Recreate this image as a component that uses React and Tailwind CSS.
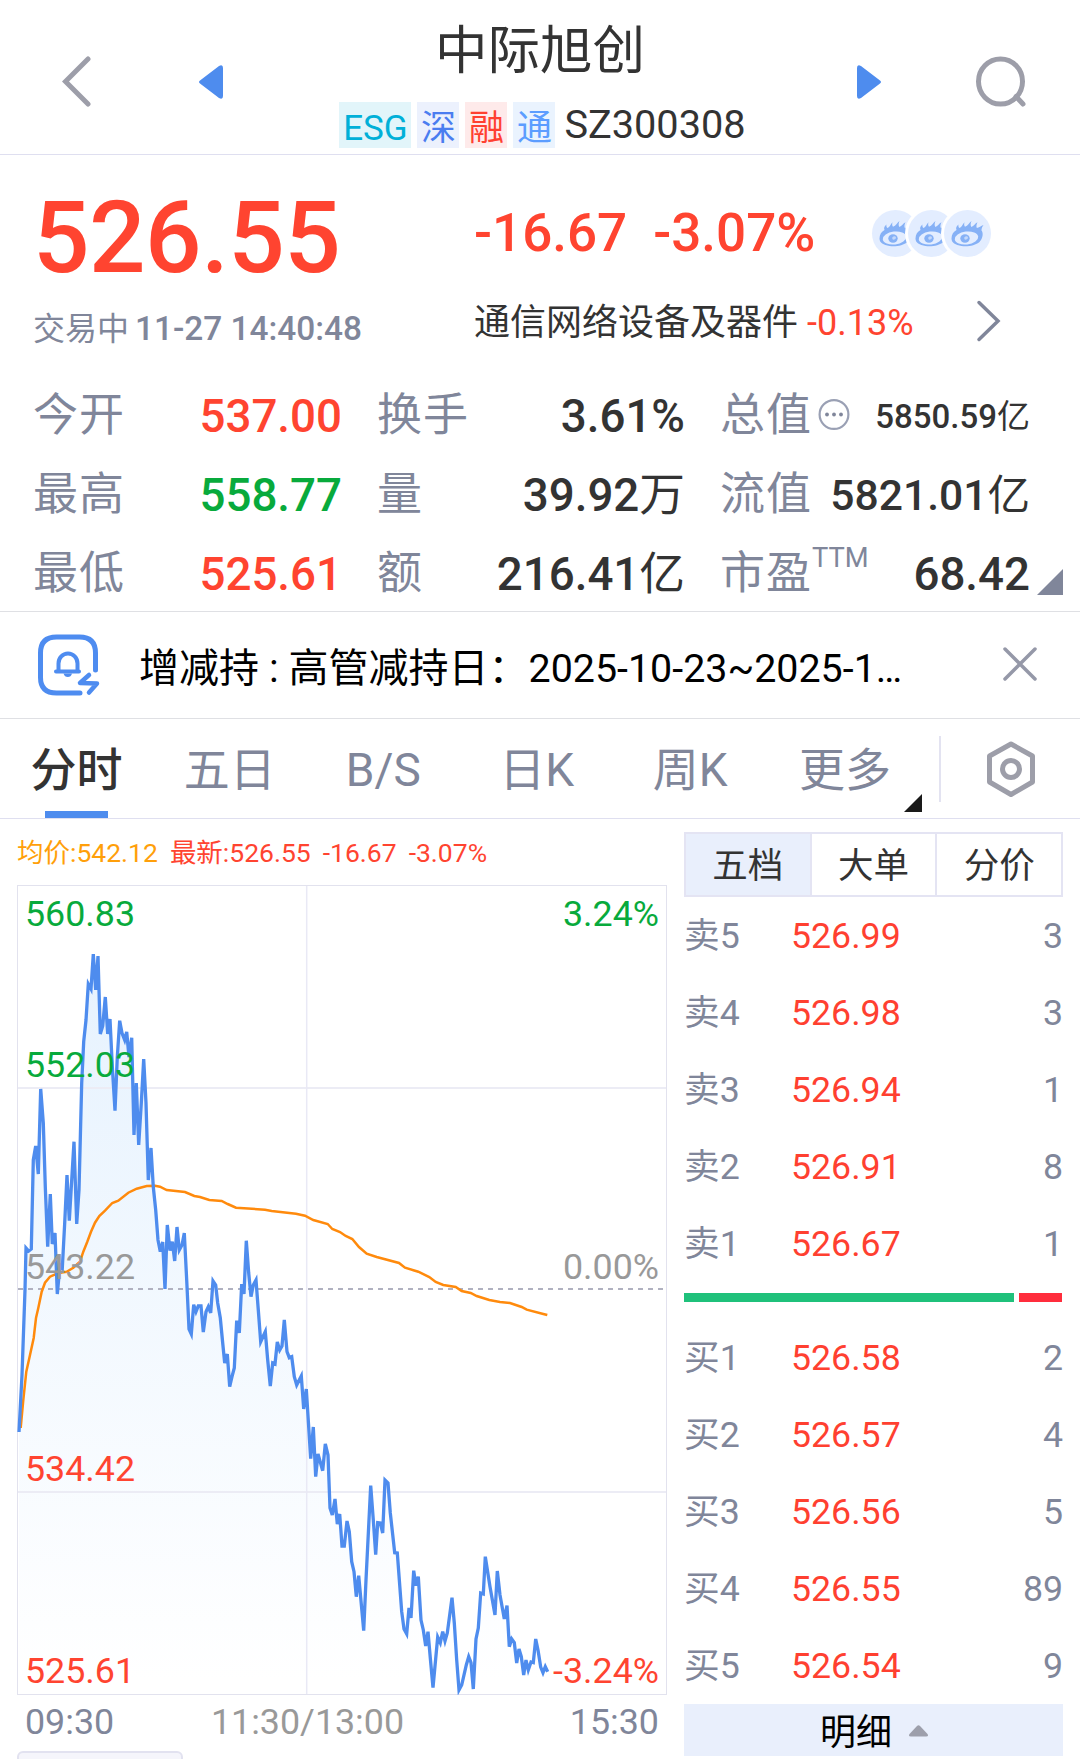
import React from 'react';

const tags = [
  { label: 'ESG', className: 'w-[72px] bg-[#e2f5fa] text-[#00b0d8]' },
  { label: '深', className: 'w-[42px] bg-[#ecf1fd] text-[#4a7df0]' },
  { label: '融', className: 'w-[42px] bg-[#feeaea] text-[#ff4030]' },
  { label: '通', className: 'w-[42px] bg-[#eaf3fe] text-[#5c9dff]' },
];

const tabs = ['五日', 'B/S', '日K', '周K'];

const sells = [
  ['卖5', '526.99', '3'],
  ['卖4', '526.98', '3'],
  ['卖3', '526.94', '1'],
  ['卖2', '526.91', '8'],
  ['卖1', '526.67', '1'],
];

const buys = [
  ['买1', '526.58', '2'],
  ['买2', '526.57', '4'],
  ['买3', '526.56', '5'],
  ['买4', '526.55', '89'],
  ['买5', '526.54', '9'],
];

const pricePoints =
  '19,1432 22,1375 25,1290 26,1248 28.7,1251 31.3,1249 33.3,1160 35.7,1146 38.3,1174 40.7,1089 43.3,1123 45.3,1187 47.7,1246.7 50.3,1194 52.3,1244 55,1233 57.3,1294 60,1265 62.3,1268 64.7,1223 67,1175 69.3,1220.7 74,1141.7 76.7,1224 79,1190 81.7,1083 83.7,1041.7 86,1020 88.3,984 91,989 93.3,954 95.7,990 98,956 100.3,1034 102.7,1026 105.3,997 107.7,1034 110,1019 112.3,1066.7 115,1110.7 117.3,1057 119.7,1020.7 122,1033 124.7,1040 126.7,1032 129,1057 131.7,1037.7 134,1135 136.3,1083 138.7,1145 141.3,1103 143.7,1059 146,1103 148.3,1180 151,1148 153.3,1187 155.7,1210 158,1240 160.3,1251.7 162.7,1242 165,1289 167.3,1225 170,1250.7 172.3,1241.7 174.7,1261 177,1227 179.3,1250 182,1245 184.3,1233 186.7,1280 189,1329 191.3,1334 193.7,1304.7 196,1311.7 198.3,1306 201,1306 203.3,1332 206,1311.7 208.3,1306.7 210.7,1313 213,1281 215.7,1285 217.7,1303 220.3,1318 222.7,1343 224.7,1363 227.3,1354 229.7,1386.7 232,1376.7 234.3,1368 236.7,1320.7 239.3,1333 241.7,1284 244,1294 246.3,1240.7 248.7,1273 251,1296.7 253.3,1285 256,1280 258.3,1310 260.7,1341.7 265.3,1331.7 267.7,1360 270.3,1386 272.7,1363 275,1364 277.3,1342 279.7,1350 282,1346 284.3,1320 287,1351.7 289.3,1357.7 291.7,1356.7 294.3,1376.7 296.7,1385 301.3,1376 303.7,1409 306.3,1389 310.7,1458.7 313.3,1427 315.7,1476.7 318,1454 322.7,1470.7 325.3,1444 328,1455 330,1508 332.3,1515 335,1499 337.3,1524 339.7,1514 342,1546 344.3,1546 347,1521 349.3,1531.7 351.7,1561.7 354,1571.7 356.3,1596.7 358.7,1575.7 363.7,1630.7 366,1580 370.7,1485.7 373.3,1520 375.7,1554.7 377.7,1522.7 380.3,1523 382.7,1533 385,1480 388,1483 390.3,1513 394.7,1552.7 397.3,1553 401.7,1611.7 404,1629 406.7,1634 409,1608 411,1618 413.7,1570.7 416,1585.7 418.3,1576.7 421,1620 423.3,1630 425.7,1646 428,1631.7 430.3,1658 433,1687.7 437.7,1637 440.3,1642.7 442.7,1631.7 445,1641 447.3,1633 452,1597.7 454.3,1623 456.7,1660 459,1690 461.7,1685 466.3,1665 468.7,1656.7 471,1662.7 473.3,1689 476,1639 478.3,1628 480.7,1593 483.3,1594 485.3,1556.7 490,1586.7 495,1615 497.3,1571 500,1595 504.3,1619 507,1605.7 509.3,1646.7 511.7,1639 514.3,1642.7 516.7,1663 519,1649 521.3,1656.7 523.7,1675 526,1660 528.3,1670 531,1662 533.3,1662.7 535.7,1639 538,1650 540.7,1667 543,1672.7 545.3,1666.7 547.7,1671.7';

const averagePoints =
  '20.7,1428 23.3,1400 26.3,1371.7 30,1355 33.7,1338 36,1318 38.3,1308 41.7,1291.7 45,1282.7 50,1276.7 58.3,1273 66.7,1271.7 73.3,1267.7 80,1261.7 83.3,1251.7 87.3,1241.7 91,1231.7 95,1222.7 99.3,1216 105,1210.7 112.3,1203 118.3,1200.7 128.3,1192.7 136.7,1188.7 146.7,1186 155,1185.7 160,1186.7 166.7,1190 185,1192 194.3,1196 200,1197 209.3,1200 221.7,1201 227.7,1204 236,1207.7 265,1209.7 271.7,1211 296,1213.7 305,1215.7 313.3,1220 327.7,1224 332.3,1229 340,1232 345.7,1236 352.3,1239 359,1247 366.7,1253.7 376.7,1257 399,1263 405,1267.7 418.3,1271.7 429.3,1277 435.7,1282 443.3,1285 455.7,1287 461.7,1291 470.7,1293 476.7,1296 489.3,1300 500,1302 510,1303 521.7,1307 526.7,1309.7 543.3,1314 547.3,1315';

const EyeBadge = ({ className }) => (
  <svg className={className} width="53" height="53" viewBox="0 0 53 53">
    <circle cx="26.5" cy="26.5" r="26.5" fill="#fff" />
    <circle cx="26.5" cy="26.5" r="23.5" fill="#e3edff" />
    <g transform="translate(10.5 13.5)">
      <path
        d="M0 18C0 14 2 11 5 9.500C4 7.500 5 5.500 7 4C6.600 5.600 7 6.800 8 7.600C10.500 6.500 11 3.500 13 1.800C12.500 3.500 12.500 5.200 13.500 6.300C16.500 5.400 17.500 2.500 20 0.500C19 2.800 18.800 4.800 19.800 6.400C22.500 5.600 23.500 3 26 1.800C25 4 24.600 5.800 25.300 7.400C27.500 7.200 29.500 5.500 32 4.500C30.500 6.500 30 8.200 30 10C32 12 31.500 18 28 21.500C24 25 16 26.500 10 25.500C4 24.500 0 22.500 0 18Z"
        fill="#86b1f6"
      />
      <ellipse cx="15" cy="17.500" rx="11.800" ry="6.500" transform="rotate(-7 15 17.500)" fill="#e3edff" />
      <ellipse cx="13.500" cy="18" rx="4.700" ry="4.200" fill="#86b1f6" />
      <ellipse cx="14.600" cy="17.400" rx="2" ry="1.500" transform="rotate(-30 14.600 17.400)" fill="#c3d8fb" />
    </g>
  </svg>
);

const Stat = ({ label, value, unit, extra, className }) => (
  <div className="flex h-[79px] items-center justify-between">
    <div className="flex items-center">
      <span className="text-[45px] leading-none tracking-[1px] text-[#80869a]">{label}</span>
      {extra}
    </div>
    <span className={`pt-[2px] leading-none whitespace-nowrap font-medium ${className}`}>
      {value}
      {unit && <span className="font-normal">{unit}</span>}
    </span>
  </div>
);

const OrderRow = ({ row }) => (
  <div className="flex h-[77px] items-center pt-[2px] text-[35.700px] leading-none text-[#80869a]">
    <span className="w-[107px]">{row[0]}</span>
    <span className="text-[#ff4030]">{row[1]}</span>
    <span className="ml-auto">{row[2]}</span>
  </div>
);

const Header = () => (
  <header className="flex h-[155px] border-b border-[#dfdff0]">
    <svg className="ml-[62px] mt-[55px]" width="30" height="53" viewBox="0 0 30 53" fill="none" stroke="#9d9ea9" strokeWidth="5" strokeLinecap="round">
      <path d="M26 4L3.500 26.500L26 49" />
    </svg>
    <svg className="ml-[107px] mt-[65px]" width="24" height="34" viewBox="0 0 24 34">
      <path d="M1 15.500L20 1Q24 -1 24 3V31Q24 35 20 33L1 18.500Q-1 17 1 15.500Z" fill="#4e8cee" />
    </svg>
    <div className="flex flex-1 flex-col items-center pt-[25px]">
      <h1 className="text-[52.500px] leading-[52px] text-[#333]">中际旭创</h1>
      <div className="ml-[5px] mt-[25px] flex h-[46px] items-center gap-[6px]">
        {tags.map((tag) => (
          <span key={tag.label} className={`flex h-[46px] items-center justify-center pt-[7px] text-[35px] leading-none ${tag.className}`}>
            {tag.label}
          </span>
        ))}
        <span className="ml-[3px] text-[39.700px] leading-none text-[#333]">SZ300308</span>
      </div>
    </div>
    <svg className="mt-[65px]" width="24" height="34" viewBox="0 0 24 34">
      <path d="M23 15.500L4 1Q0 -1 0 3V31Q0 35 4 33L23 18.500Q25 17 23 15.500Z" fill="#4e8cee" />
    </svg>
    <svg className="ml-[94px] mr-[53px] mt-[55px]" width="52" height="54" viewBox="0 0 52 54" fill="none" stroke="#9d9ea9" strokeWidth="5">
      <ellipse cx="25.500" cy="26.500" rx="22" ry="22.500" />
      <path d="M41 41.500L48 49" strokeLinecap="round" />
    </svg>
  </header>
);

const Quote = () => (
  <section className="h-[456px]">
    <div className="flex h-[221px] text-[#ff4430]">
      <div className="w-[474px] pl-[33px] pt-[33px]">
        <div className="text-[99.500px] font-medium leading-[100px] tracking-[-0.500px]">526.55</div>
        <div className="mt-[24px] flex items-center text-[33.400px] leading-[34px] text-[#80869a]">
          <span className="text-[32px]">交易中</span>
          <span className="ml-[6px] font-medium">11-27 14:40:48</span>
        </div>
      </div>
      <div className="flex-1">
        <div className="flex h-[107px] items-center pt-[49px]">
          <span className="pt-px text-[53px] font-medium leading-none">-16.67</span>
          <span className="ml-[26px] pt-px text-[53px] font-medium leading-none">-3.07%</span>
          <div className="ml-[54px] flex">
            <EyeBadge />
            <EyeBadge className="-ml-[17px]" />
            <EyeBadge className="-ml-[17px]" />
          </div>
        </div>
        <div className="flex items-center pt-[40px] leading-[36px]">
          <span className="pt-[2px] text-[36px] text-[#333]">通信网络设备及器件</span>
          <span className="ml-[9px] pt-[2px] text-[36px]">-0.13%</span>
          <svg className="-mt-[2px] ml-[62px]" width="26" height="42" viewBox="0 0 26 42" fill="none" stroke="#80869a" strokeWidth="3.500">
            <path d="M3 2.500L22 21L3 39.500" strokeLinecap="round" />
          </svg>
        </div>
      </div>
    </div>
    <div className="relative grid grid-cols-[309px_308px_310px] gap-x-[35px] pl-[33px]">
      <Stat label="今开" value="537.00" className="text-[45.700px] text-[#ff4430]" />
      <Stat label="换手" value="3.61%" className="text-[45.700px] text-[#333]" />
      <Stat
        label="总值"
        value="5850.59"
        unit="亿"
        className="text-[33px] text-[#333]"
        extra={
          <svg className="ml-[5px]" width="34" height="34" viewBox="0 0 34 34" fill="#80869a">
            <circle cx="17" cy="15.500" r="14.400" fill="none" stroke="#9aa0b4" strokeWidth="2.200" />
            <circle cx="10" cy="15.500" r="1.900" />
            <circle cx="17" cy="15.500" r="1.900" />
            <circle cx="24" cy="15.500" r="1.900" />
          </svg>
        }
      />
      <Stat label="最高" value="558.77" className="text-[45.700px] text-[#08aa3c]" />
      <Stat label="量" value="39.92" unit="万" className="text-[45.700px] text-[#333]" />
      <Stat label="流值" value="5821.01" unit="亿" className="text-[42.600px] text-[#333]" />
      <Stat label="最低" value="525.61" className="text-[45.700px] text-[#ff4430]" />
      <Stat label="额" value="216.41" unit="亿" className="text-[45.700px] text-[#333]" />
      <Stat
        label="市盈"
        value="68.42"
        className="text-[45.700px] text-[#333]"
        extra={<span className="mb-[30px] text-[27.300px] leading-none text-[#80869a]">TTM</span>}
      />
      <svg className="absolute right-[17px] top-[193px]" width="26" height="26" viewBox="0 0 26 26">
        <path d="M26 0V26H0Z" fill="#80869a" />
      </svg>
    </div>
  </section>
);

const Notice = () => (
  <div className="flex h-[108px] items-center border-y border-[#dfe0e4]">
    <svg className="-mt-[1px] ml-[36px]" width="66" height="66" viewBox="0 0 66 66" fill="none" stroke="#4e8cf0" strokeWidth="5" strokeLinecap="round" strokeLinejoin="round">
      <path d="M59.500 38V21Q59.500 5 43.500 5H20.500Q4.500 5 4.500 21V45.500Q4.500 61 20.500 61H44" />
      <path d="M22.500 39V31.500A9.500 10 0 0 1 41.500 31.500V39M20 39.500H43" strokeWidth="4" />
      <path d="M27.500 41.500H36Q35 45 31.800 45T27.500 41.500Z" fill="#4e8cf0" stroke="none" />
      <path d="M53 43L44 51L61 51.500L53 60.500" strokeWidth="4.500" />
    </svg>
    <div className="ml-[37px] flex-1 pt-[8px] text-[40px] leading-none whitespace-nowrap text-black">
      增减持 : 高管减持日：<span className="text-[39.400px]">2025-10-23~2025-1…</span>
    </div>
    <svg className="-mt-[2px] mr-[42px]" width="36" height="36" viewBox="0 0 36 36" stroke="#9598a8" strokeWidth="3.500" strokeLinecap="round">
      <path d="M3 3L33 33M33 3L3 33" />
    </svg>
  </div>
);

const PeriodTabs = () => (
  <nav className="flex h-[100px] border-b border-[#dfdff0] text-[46px] text-[#80869a]">
    <div className="flex w-[153px] flex-col items-center pt-[28px]">
      <span className="font-medium leading-[46px] text-[#333]">分时</span>
      <span className="mt-[18px] h-[7px] w-[63px] bg-[#4e8cee]" />
    </div>
    {tabs.map((tab) => (
      <div key={tab} className="w-[153.500px] pt-[28px] text-center leading-[46px]">
        {tab}
      </div>
    ))}
    <div className="relative w-[155px] pl-[32px] pt-[28px] leading-[46px]">
      更多
      <svg className="absolute bottom-[6px] right-0" width="18" height="18" viewBox="0 0 18 18">
        <path d="M18 0V18H0Z" fill="#1a1a1a" />
      </svg>
    </div>
    <div className="ml-[17px] mt-[17px] h-[66px] w-[2px] bg-[#e3e3f1]" />
    <svg className="ml-[44px] mt-[21px]" width="52" height="58" viewBox="0 0 52 58" fill="none" stroke="#9d9ea9" strokeWidth="5" strokeLinejoin="round">
      <path d="M26 4L47.500 16V42L26 54.500L4.500 42V16Z" />
      <circle cx="26" cy="29" r="8.500" />
    </svg>
  </nav>
);

const Chart = () => (
  <div className="w-[667px] pl-[17px]">
    <div className="flex h-[66px] items-center gap-[12px] pt-[2px] text-[26.500px] leading-none text-[#ff4430]">
      <span className="text-[#ff9f0a]">均价:542.12</span>
      <span>最新:526.55</span>
      <span>-16.67</span>
      <span>-3.07%</span>
    </div>
    <div className="relative h-[810px] w-[650px] text-[35.800px] leading-none">
      <svg width="650" height="810" viewBox="17 885 650 810" fill="none">
        <defs>
          <linearGradient id="area" gradientUnits="userSpaceOnUse" x1="0" y1="954" x2="0" y2="1680">
            <stop offset="0" stopColor="#e6f2fe" />
            <stop offset="1" stopColor="#ffffff" />
          </linearGradient>
        </defs>
        <path d={`M19,1694 L${pricePoints} L547.7,1694Z`} fill="url(#area)" />
        <path d="M18 1088H666M18 1492H666" stroke="#ececf5" strokeWidth="2" />
        <path d="M306.700 885V1694" stroke="#e9e9f5" strokeWidth="1.500" />
        <rect x="17.500" y="885.500" width="649" height="809" stroke="#e2e2ee" />
        <path d="M18 1289H666" stroke="#b0b1c0" strokeWidth="2" strokeDasharray="5 5" />
        <polyline points={averagePoints} stroke="#ff8a0c" strokeWidth="2.500" />
        <polyline points={pricePoints} stroke="#4e8cee" strokeWidth="3.300" />
      </svg>
      <span className="absolute left-[8px] top-[12px] text-[#08aa3c]">560.83</span>
      <span className="absolute right-[8px] top-[12px] text-[#08aa3c]">3.24%</span>
      <span className="absolute left-[8px] top-[163px] text-[#08aa3c]">552.03</span>
      <span className="absolute left-[8px] top-[365px] text-[#999]">543.22</span>
      <span className="absolute right-[8px] top-[365px] text-[#999]">0.00%</span>
      <span className="absolute left-[8px] top-[567px] text-[#ff4430]">534.42</span>
      <span className="absolute left-[8px] top-[769px] text-[#ff4430]">525.61</span>
      <span className="absolute right-[8px] top-[769px] text-[#ff4430]">-3.24%</span>
    </div>
    <div className="flex h-[56px] items-center justify-between pl-[8px] pr-[8px] text-[35.800px] leading-none text-[#80869a]">
      <span>09:30</span>
      <span className="mr-[69px] text-[#999]">11:30/13:00</span>
      <span>15:30</span>
    </div>
    <div className="h-[30px] w-[166px] rounded-md border-2 border-[#e2e2f0] bg-[#f5f5fb]" />
  </div>
);

const OrderBook = () => (
  <div className="ml-[17px] w-[379px] pt-[13px]">
    <div className="flex h-[65px] border-2 border-[#e4e4f3] text-[35.500px] leading-none text-[#333]">
      <div className="flex flex-1 items-center justify-center bg-[#e9effc] pt-[5px]">五档</div>
      <div className="flex flex-1 items-center justify-center border-x-2 border-[#e4e4f3] pt-[5px]">大单</div>
      <div className="flex flex-1 items-center justify-center pt-[5px]">分价</div>
    </div>
    <div>{sells.map((row) => <OrderRow key={row[0]} row={row} />)}</div>
    <div className="mb-[17px] mt-[11px] flex h-[9px] gap-[5px]">
      <div className="w-[330px] bg-[#1fc17b]" />
      <div className="w-[43px] bg-[#ff2d3c]" />
    </div>
    <div>{buys.map((row) => <OrderRow key={row[0]} row={row} />)}</div>
    <div className="flex h-[52px] items-center justify-center gap-[17px] bg-[#e9effc] pl-[1px] text-[36px] leading-none text-black">
      <span className="pt-[5px]">明细</span>
      <svg className="mt-[2px]" width="19" height="12" viewBox="0 0 19 12">
        <path d="M8 1Q9.500 -0.500 11 1L18.500 9Q20 11.500 17 11.500H2Q-1 11.500 0.500 9Z" fill="#9d9fab" />
      </svg>
    </div>
  </div>
);

const App = () => {
  return (
    <div className="h-[1759px] w-[1080px] overflow-hidden bg-white font-['Roboto','Noto_Sans_CJK_SC',sans-serif]">
      <Header />
      <Quote />
      <Notice />
      <PeriodTabs />
      <div className="flex">
        <Chart />
        <OrderBook />
      </div>
    </div>
  );
};

export default App;
